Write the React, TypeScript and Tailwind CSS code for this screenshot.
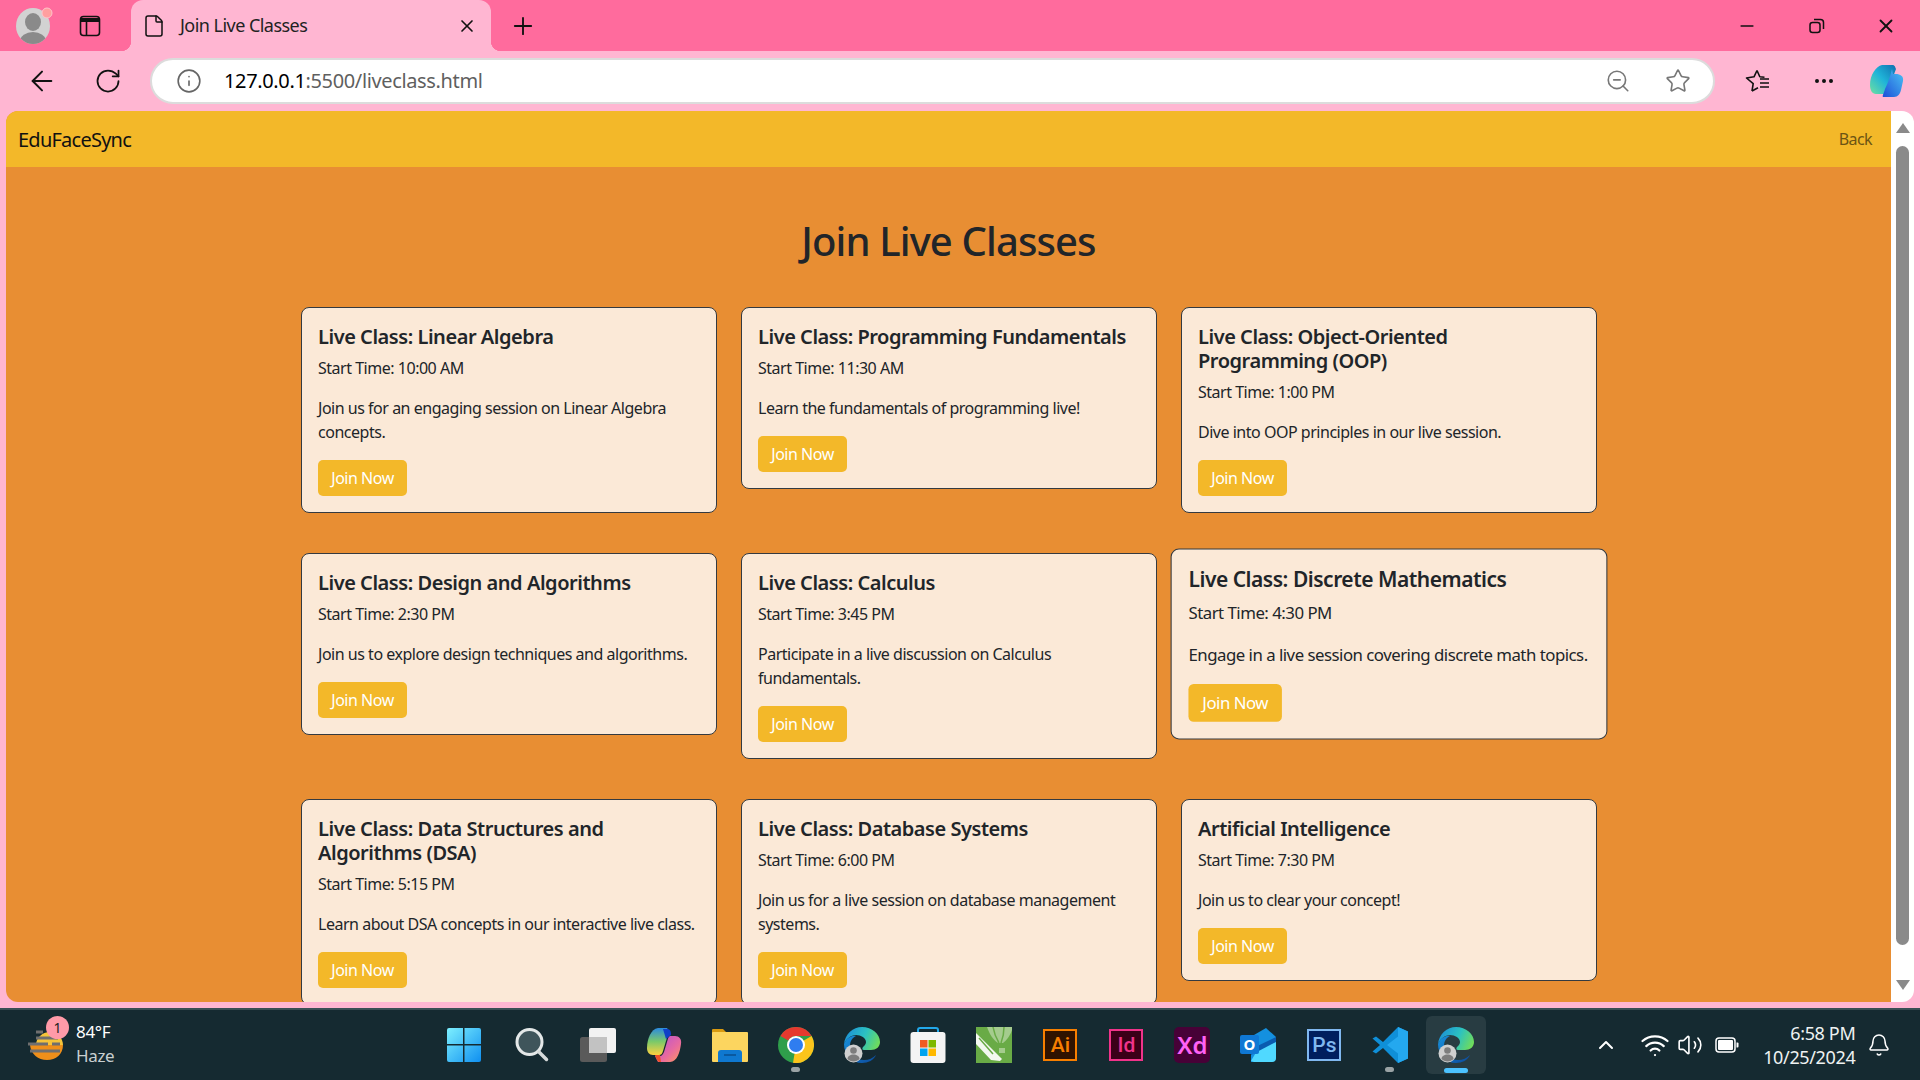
import { ChevronUp, Minus, Plus, X, ArrowLeft, RotateCw, Info, ZoomOut, Star, MoreHorizontal, Bell, Wifi, Volume2, File } from 'lucide-react'

const font = { fontFamily: '"Noto Sans", sans-serif' }

interface LiveClass {
  title: string
  time: string
  text: string
  hover?: boolean
}

const classes: LiveClass[] = [
  { title: 'Live Class: Linear Algebra', time: '10:00 AM', text: 'Join us for an engaging session on Linear Algebra concepts.' },
  { title: 'Live Class: Programming Fundamentals', time: '11:30 AM', text: 'Learn the fundamentals of programming live!' },
  { title: 'Live Class: Object-Oriented Programming (OOP)', time: '1:00 PM', text: 'Dive into OOP principles in our live session.' },
  { title: 'Live Class: Design and Algorithms', time: '2:30 PM', text: 'Join us to explore design techniques and algorithms.' },
  { title: 'Live Class: Calculus', time: '3:45 PM', text: 'Participate in a live discussion on Calculus fundamentals.' },
  { title: 'Live Class: Discrete Mathematics', time: '4:30 PM', text: 'Engage in a live session covering discrete math topics.', hover: true },
  { title: 'Live Class: Data Structures and Algorithms (DSA)', time: '5:15 PM', text: 'Learn about DSA concepts in our interactive live class.' },
  { title: 'Live Class: Database Systems', time: '6:00 PM', text: 'Join us for a live session on database management systems.' },
  { title: 'Artificial Intelligence', time: '7:30 PM', text: 'Join us to clear your concept!' },
]

function ClassCard({ item }: { item: LiveClass }) {
  return (
    <div className={`bg-[#fbe9d7] border border-[#343a40] rounded-lg p-4 text-[#212529] ${item.hover ? 'scale-105' : ''}`}>
      <h5 className="pt-px text-[20px] leading-6 font-semibold tracking-[-0.023em] mb-[7px]">{item.title}</h5>
      <p className="text-[16px] leading-6 tracking-[-0.03em] mb-4">Start Time: {item.time}</p>
      <p className="text-[16px] leading-6 tracking-[-0.03em] mb-4">{item.text}</p>
      <button type="button" className="h-9 w-[89px] rounded-[5px] bg-[#f3b829] text-white text-[16px] tracking-[-0.03em]">Join Now</button>
    </div>
  )
}

function Avatar() {
  return (
    <svg width="40" height="38" viewBox="0 0 40 38">
      <defs>
        <clipPath id="av"><ellipse cx="17" cy="19" rx="17" ry="18" /></clipPath>
      </defs>
      <ellipse cx="17" cy="19" rx="17" ry="18" fill="#d2d2d2" />
      <g clipPath="url(#av)" fill="#8a8a8a">
        <ellipse cx="17" cy="15" rx="8" ry="9" />
        <ellipse cx="17" cy="34" rx="13" ry="9" />
      </g>
      <circle cx="31" cy="6" r="5" fill="#ff9f9f" stroke="#ffc4cc" strokeWidth="1" />
    </svg>
  )
}

function TabsIcon() {
  return (
    <svg width="22" height="22" viewBox="0 0 22 22" fill="none" stroke="#111" strokeWidth="1.6">
      <rect x="1.5" y="1.5" width="19" height="19" rx="3" />
      <path d="M1.5 5h19" strokeWidth="4" />
      <path d="M7.5 6v14" />
    </svg>
  )
}

function RestoreIcon() {
  return (
    <svg width="16" height="16" viewBox="0 0 16 16" fill="none" stroke="#111" strokeWidth="1.5">
      <rect x="1" y="4.5" width="10" height="10" rx="2.5" />
      <path d="M5 1.5h6.5a3 3 0 0 1 3 3V11" />
    </svg>
  )
}

function FavsIcon() {
  return (
    <svg width="26" height="24" viewBox="0 0 26 24" fill="none" stroke="#111" strokeWidth="1.6" strokeLinejoin="round">
      <path d="M12 1.500l2.800 6.300 4.700.5M7 22l1.200-7.400L1.500 9l7.500-1.200L12 1.500" />
      <path d="M7 22l6-3.200" />
      <path d="M15 10h9M15 14h9M15 18h9" />
    </svg>
  )
}

function EdgeCopilot() {
  return (
    <svg width="36" height="36" viewBox="0 0 36 36">
      <defs>
        <linearGradient id="ca" x1="0" y1="1" x2="1" y2="0"><stop offset="0" stopColor="#6fe0a0" /><stop offset="0.5" stopColor="#1fb4d8" /><stop offset="1" stopColor="#0f6fb0" /></linearGradient>
        <linearGradient id="cb" x1="0" y1="1" x2="1" y2="0"><stop offset="0" stopColor="#1d4fd8" /><stop offset="1" stopColor="#4cc4f4" /></linearGradient>
      </defs>
      <path d="M2 22C2 12 8 3 14 2h10c3 0 3 2 4 4l-7 19c-1 4-3 6-6 6H8c-4 0-6-4-6-9z" fill="url(#ca)" />
      <path d="M24 6c-2 8-4 14-7 20-1 4-3 7-2 8h11c4 0 6-3 7-7l2-9c1-5-3-7-7-7h-3z" fill="url(#cb)" />
    </svg>
  )
}

function WinLogo() {
  return (
    <svg width="36" height="36" viewBox="0 0 36 36">
      <defs>
        <linearGradient id="wl" x1="0" y1="0" x2="1" y2="1"><stop offset="0" stopColor="#7df0ff" /><stop offset="1" stopColor="#0f8ff0" /></linearGradient>
      </defs>
      <path d="M1 3a2 2 0 0 1 2-2h14v16H1zM18.500 1H33a2 2 0 0 1 2 2v14H18.500zM1 18.500h16V35H3a2 2 0 0 1-2-2zM18.500 18.500H35V33a2 2 0 0 1-2 2H18.500z" fill="url(#wl)" />
    </svg>
  )
}

function SearchIcon() {
  return (
    <svg width="36" height="36" viewBox="0 0 36 36" fill="none">
      <circle cx="15.500" cy="15" r="12.500" fill="#3f555b" stroke="#e4e8e8" strokeWidth="3" />
      <path d="M25 25l7.500 7.500" stroke="#d6dada" strokeWidth="3.500" strokeLinecap="round" />
    </svg>
  )
}

function TaskView() {
  return (
    <svg width="36" height="36" viewBox="0 0 36 36">
      <rect x="9" y="1" width="27" height="25" rx="2" fill="#f2f2f2" />
      <rect x="0" y="10" width="27" height="25" rx="2.500" fill="#5a5a5a" />
      <rect x="9" y="10" width="18" height="16" fill="#c2c2c2" />
    </svg>
  )
}

function CopilotColor() {
  return (
    <svg width="36" height="36" viewBox="0 0 36 36">
      <defs>
        <linearGradient id="ta" x1="0" y1="0" x2="0" y2="1"><stop offset="0" stopColor="#2b8ae0" /><stop offset="0.5" stopColor="#7ac96a" /><stop offset="1" stopColor="#ffd23f" /></linearGradient>
        <linearGradient id="tb" x1="0" y1="0" x2="1" y2="1"><stop offset="0" stopColor="#b04fd8" /><stop offset="0.6" stopColor="#e86aa0" /><stop offset="1" stopColor="#ff9a5a" /></linearGradient>
      </defs>
      <path d="M1 21C1 12 5 2 12 1h9l2 3-6 20c-1 3-2 4-4 4H7c-4 0-6-3-6-7z" fill="url(#ta)" />
      <path d="M17 2h4c3 0 4 2 4 6l-5 4z" fill="#1040c8" />
      <path d="M24 9h5c4 0 7 3 6 8-1 8-4 18-11 18H12l-3-6h5c2 0 3-2 4-4l3-10c1-3 1-5 3-6z" fill="url(#tb)" />
      <path d="M9 28h5l1 7h-2c-2-1-3-4-4-7z" fill="#f0502a" />
    </svg>
  )
}

function FolderIcon() {
  return (
    <svg width="36" height="36" viewBox="0 0 36 36">
      <path d="M0 3a1 1 0 0 1 1-1h10l4 4h-15z" fill="#d99a10" />
      <rect x="0" y="5" width="36" height="30" rx="1" fill="#fcd55f" />
      <path d="M6 35v-9a3 3 0 0 1 3-3h18a3 3 0 0 1 3 3v9z" fill="#0f78d0" />
      <path d="M12 28h12" stroke="#0a4f90" strokeWidth="1.500" />
    </svg>
  )
}

function ChromeIcon() {
  return (
    <svg width="36" height="36" viewBox="0 0 36 36">
      <circle cx="18" cy="18" r="18" fill="#2f9e4b" />
      <path d="M18 18L33.600 9A18 18 0 0 1 15 35.800z" fill="#fbc41c" />
      <path d="M2.400 9A18 18 0 0 1 33.600 9H18a9 9 0 0 0-7.800 4.500z" fill="#e5392f" />
      <circle cx="18" cy="18" r="9" fill="#fff" />
      <circle cx="18" cy="18" r="7" fill="#2f7df0" />
    </svg>
  )
}

function EdgeIcon({ id }: { id: string }) {
  return (
    <svg width="36" height="36" viewBox="0 0 36 36">
      <defs>
        <linearGradient id={`${id}a`} x1="0" y1="0.300" x2="1" y2="0.600"><stop offset="0" stopColor="#1b8fd8" /><stop offset="0.550" stopColor="#2cc2c0" /><stop offset="1" stopColor="#6fdc5c" /></linearGradient>
        <linearGradient id={`${id}b`} x1="0" y1="0" x2="1" y2="1"><stop offset="0" stopColor="#1790dc" /><stop offset="1" stopColor="#0c4a9c" /></linearGradient>
      </defs>
      <path d="M0 17C1 7 9 0 18 0c10 0 18 7 18 15 0 5-4 8-9 8h-7c-2 0-2-2-1-3 2-2 3-3 3-5 0-4-5-7-10-7C7 8 2 12 0 17z" fill={`url(#${id}a)`} />
      <path d="M0 17c2-5 7-9 12-8-4 2-6 5-6 10 0 8 6 14 14 14 5 0 9-2 12-5-2 5-8 8-14 8C8 36 0 28 0 17z" fill={`url(#${id}b)`} />
      <circle cx="9.500" cy="26.500" r="9" fill="#cfcfcf" />
      <circle cx="9.500" cy="23.500" r="3.300" fill="#7d7d7d" />
      <path d="M3.500 32c0-3 3-4.500 6-4.500s6 1.500 6 4.500c-1.500 1.500-3.500 2.500-6 2.500s-4.500-1-6-2.500z" fill="#7d7d7d" />
    </svg>
  )
}

function StoreIcon() {
  return (
    <svg width="36" height="36" viewBox="0 0 36 36">
      <path d="M8 7V3a2 2 0 0 1 2-2h16a2 2 0 0 1 2 2v4" fill="none" stroke="#22a8ea" strokeWidth="2" />
      <rect x="0.500" y="5" width="35" height="31" rx="3" fill="#f4f4f4" />
      <rect x="10" y="13" width="7.500" height="7.500" fill="#f05a22" />
      <rect x="18.500" y="13" width="7.500" height="7.500" fill="#7db800" />
      <rect x="10" y="21.500" width="7.500" height="7.500" fill="#01a4ef" />
      <rect x="18.500" y="21.500" width="7.500" height="7.500" fill="#ffb900" />
    </svg>
  )
}

function CorelIcon() {
  return (
    <svg width="36" height="36" viewBox="0 0 36 36">
      <rect width="36" height="36" fill="#69ab46" />
      <path d="M11 0h25v3c-2 6-6 11-9 13h-5C17 13 13 6 11 0z" fill="#a5cc8e" />
      <path d="M17 0c1 6 3 11 6 16M28 0c0 6-1 11-3 16" stroke="#69ab46" strokeWidth="1.500" fill="none" />
      <rect x="23" y="21" width="6" height="5" fill="#a5cc8e" />
      <path d="M0 6l26 26-2 2-9-1L0 17z" fill="#f4f8f0" />
      <path d="M3 11l14 16" stroke="#69ab46" strokeWidth="1.500" />
    </svg>
  )
}

function AdobeBox({ label, bg, border }: { label: string; bg: string; border: string }) {
  return (
    <div className={`w-[34px] h-[32px] border-[2.5px] flex items-center justify-center font-['Roboto'] font-medium text-[21px] leading-none ${bg} ${border}`}>
      {label}
    </div>
  )
}

function OutlookIcon() {
  return (
    <svg width="36" height="36" viewBox="0 0 36 36">
      <path d="M14 8l12-7 10 9v20a5 5 0 0 1-5 5H11V12z" fill="#1490df" />
      <path d="M11 34l7-12 18-8v17a4 4 0 0 1-4 4H14z" fill="#50d9ff" />
      <path d="M11 22l25-12v5L11 28z" fill="#0a5bb0" />
      <rect x="0" y="8" width="19" height="19" rx="2" fill="#0f78d4" />
      <text x="9.500" y="23" textAnchor="middle" fontSize="15" fontWeight="700" fill="#fff" fontFamily="Noto Sans">O</text>
    </svg>
  )
}

function VsCodeIcon() {
  return (
    <svg width="36" height="36" viewBox="0 0 36 36">
      <path d="M26 0l10 4.500v27L26 36 11 21l-7 5.500-3.500-2L8 18 .5 11.500 4 9.500 11 15z" fill="#0f8fd8" />
      <path d="M26 0l10 4.500v27L26 36zM26 9.500L15 18l11 8.500z" fill="#24a8ef" />
    </svg>
  )
}

function WeatherIcon() {
  return (
    <svg width="36" height="32" viewBox="0 0 36 32">
      <path d="M2 16h33c0 9-7 15-16 15C10 31 3 25 2 16z" fill="#ef8f1a" />
      <path d="M8 16c0-7 6-13 14-13 7 0 13 6 13 13z" fill="#f5c43a" />
      <g stroke="#6f6f6f" strokeWidth="3">
        <path d="M8 3h7M8 9h22M0 15h20M24 15h8M2 22h30" />
      </g>
    </svg>
  )
}

function BatteryIcon() {
  return (
    <svg width="24" height="16" viewBox="0 0 24 16" fill="none">
      <rect x="1" y="1" width="19" height="14" rx="3" stroke="#fff" strokeWidth="1.500" />
      <rect x="3" y="3" width="15" height="10" rx="1" fill="#fff" />
      <path d="M21.500 5.500h1a1 1 0 0 1 1 1v3a1 1 0 0 1-1 1h-1z" fill="#fff" />
    </svg>
  )
}

function AddressBar() {
  return (
    <div className="flex-1 h-[46px] ml-[28px] bg-white rounded-full border-2 border-[#dcdcdc] flex items-center">
      <Info className="w-[26px] h-[26px] ml-[24px] text-[#666]" strokeWidth={1.5} />
      <span className="ml-[22px] text-[20px] text-[#5f5f5f] tracking-[-0.018em]">
        <span className="text-black">127.0.0.1</span>:5500/liveclass.html
      </span>
      <ZoomOut className="w-[26px] h-[26px] ml-auto text-[#777]" strokeWidth={1.5} />
      <Star className="w-[26px] h-[26px] ml-[34px] mr-[22px] text-[#777]" strokeWidth={1.5} />
    </div>
  )
}

function TaskSlot({ children, dot, active }: { children: React.ReactNode; dot?: boolean; active?: boolean }) {
  return (
    <div className="relative w-[66px] h-[58px] flex items-center justify-center">
      {active && <div className="absolute left-[3px] top-0 w-[60px] h-[58px] rounded-[6px] bg-[#283c42]" />}
      <div className="relative">{children}</div>
      {dot && <div className="absolute bottom-[2px] left-[28px] w-[9px] h-[5px] rounded-full bg-[#9aa3a5]" />}
      {active && <div className="absolute bottom-[1px] left-[21px] w-[24px] h-[5px] rounded-full bg-[#4cc2ff]" />}
    </div>
  )
}

export default function App() {
  return (
    <div className="w-[1920px] h-[1080px] flex flex-col overflow-hidden bg-[#ffb6d2]" style={font}>
      {/* barra de abas */}
      <div className="h-[51px] shrink-0 bg-[#ff6b9d] flex items-center">
        <div className="ml-[16px] w-[40px]"><Avatar /></div>
        <div className="ml-[23px] w-[22px]"><TabsIcon /></div>
        <div className="relative ml-[30px] w-[360px] h-[51px] self-end bg-[#ffb6d2] rounded-t-[12px] flex items-center">
          <span className="absolute -left-[10px] bottom-0 w-[10px] h-[10px] bg-[radial-gradient(circle_at_0_0,#ff6b9d_10px,#ffb6d2_10.500px)]" />
          <span className="absolute -right-[10px] bottom-0 w-[10px] h-[10px] bg-[radial-gradient(circle_at_100%_0,#ff6b9d_10px,#ffb6d2_10.500px)]" />
          <File className="w-[24px] h-[24px] ml-[11px] text-[#111]" strokeWidth={1.5} />
          <span className="ml-[14px] text-[18px] text-[#222] tracking-[-0.03em]">Join Live Classes</span>
          <X className="w-[20px] h-[20px] ml-auto mr-[14px] text-[#111]" strokeWidth={2} />
        </div>
        <Plus className="w-[28px] h-[28px] ml-[18px] text-[#111]" strokeWidth={1.6} />
        <Minus className="w-[20px] h-[20px] ml-auto text-[#111]" strokeWidth={2} />
        <div className="ml-[52px]"><RestoreIcon /></div>
        <X className="w-[22px] h-[22px] ml-[50px] mr-[23px] text-[#111]" strokeWidth={2} />
      </div>

      {/* barra de endereco */}
      <div className="h-[60px] shrink-0 flex items-center">
        <ArrowLeft className="w-[32px] h-[32px] ml-[26px] text-[#111]" strokeWidth={1.5} />
        <RotateCw className="w-[28px] h-[28px] ml-[36px] text-[#111]" strokeWidth={1.5} />
        <AddressBar />
        <div className="ml-[30px]"><FavsIcon /></div>
        <MoreHorizontal className="w-[24px] h-[24px] ml-[41px] text-[#111]" strokeWidth={2} />
        <div className="ml-[32px] mr-[16px]"><EdgeCopilot /></div>
      </div>

      {/* pagina */}
      <div className="h-[891px] shrink-0 ml-[6px] mr-[6px] rounded-[12px] overflow-hidden flex">
        <div className="w-[1885px] bg-[#e88e33] overflow-hidden">
          <nav className="h-[56px] bg-[#f3b829] flex items-center justify-between pl-[12px] pr-[19px]">
            <a className="mt-[2px] text-[20px] text-[#111] tracking-[-0.038em]">EduFaceSync</a>
            <a className="text-[16px] text-[#6c5414] tracking-[-0.035em]">Back</a>
          </nav>
          <h1 className="text-center text-[40px] leading-[48px] font-medium text-[#212529] tracking-[-0.022em] pt-[50px] mb-[42px]">Join Live Classes</h1>
          <div className="ml-[295px] w-[1296px] grid grid-cols-3 gap-x-6 gap-y-10 items-start">
            {classes.map((c) => (
              <ClassCard key={c.title} item={c} />
            ))}
          </div>
        </div>
        <div className="w-[23px] bg-white flex flex-col items-center">
          <div className="mt-[12px] w-0 h-0 border-l-[7px] border-r-[7px] border-b-[10px] border-l-transparent border-r-transparent border-b-[#8a8a8a]" />
          <div className="mt-[13px] w-[13px] h-[799px] rounded-full bg-[#8a8a8a]" />
          <div className="mt-[35px] w-0 h-0 border-l-[7px] border-r-[7px] border-t-[10px] border-l-transparent border-r-transparent border-t-[#8a8a8a]" />
        </div>
      </div>

      {/* barra de tarefas */}
      <div className="mt-[6px] h-[72px] shrink-0 bg-[#152a31] border-t-2 border-[#3a4f55] flex items-center text-white relative">
        <div className="relative ml-[28px] w-[36px]">
          <WeatherIcon />
          <span className="absolute -top-[13px] left-[18px] w-[23px] h-[23px] rounded-full bg-[#ff9aa8] text-[#222] text-[14px] flex items-center justify-center">1</span>
        </div>
        <div className="ml-[12px] -mt-[2px] flex flex-col text-[17px] leading-[24px] tracking-[-0.02em]">
          <span>84°F</span>
          <span className="text-[#c8cfd0]">Haze</span>
        </div>
        <div className="ml-[317px] flex items-center">
          <div className="mr-[2px]"><TaskSlot><WinLogo /></TaskSlot></div>
          <TaskSlot><SearchIcon /></TaskSlot>
          <TaskSlot><TaskView /></TaskSlot>
          <TaskSlot><CopilotColor /></TaskSlot>
          <TaskSlot><FolderIcon /></TaskSlot>
          <TaskSlot dot><ChromeIcon /></TaskSlot>
          <TaskSlot><EdgeIcon id="e1" /></TaskSlot>
          <TaskSlot><StoreIcon /></TaskSlot>
          <TaskSlot><CorelIcon /></TaskSlot>
          <TaskSlot><AdobeBox label="Ai" bg="bg-[#2f1300]" border="border-[#f77f00] text-[#f77f00]" /></TaskSlot>
          <TaskSlot><AdobeBox label="Id" bg="bg-[#3b0018]" border="border-[#f0338a] text-[#f0338a]" /></TaskSlot>
          <TaskSlot>
            <div className="w-[36px] h-[36px] rounded-[5px] bg-[#470137] text-[#ff61f6] text-[24px] font-semibold flex items-center justify-center">Xd</div>
          </TaskSlot>
          <TaskSlot><OutlookIcon /></TaskSlot>
          <TaskSlot><AdobeBox label="Ps" bg="bg-[#001e5e]" border="border-[#80b8f0] text-[#80b8f0]" /></TaskSlot>
          <TaskSlot dot><VsCodeIcon /></TaskSlot>
          <TaskSlot active><EdgeIcon id="e2" /></TaskSlot>
        </div>
        <ChevronUp className="w-[24px] h-[24px] ml-[105px] text-white" strokeWidth={2} />
        <Wifi className="w-[30px] h-[30px] ml-[22px] text-white" strokeWidth={1.8} />
        <Volume2 className="w-[26px] h-[26px] ml-[7px] text-white" strokeWidth={1.5} />
        <div className="ml-[12px]"><BatteryIcon /></div>
        <div className="w-[116px] text-right text-[18px] leading-[24px] tracking-[-0.02em] text-[#eef2f2]">
          <div>6:58 PM</div>
          <div>10/25/2024</div>
        </div>
        <Bell className="w-[24px] h-[24px] ml-[12px] text-white" strokeWidth={1.5} />
      </div>
    </div>
  )
}
